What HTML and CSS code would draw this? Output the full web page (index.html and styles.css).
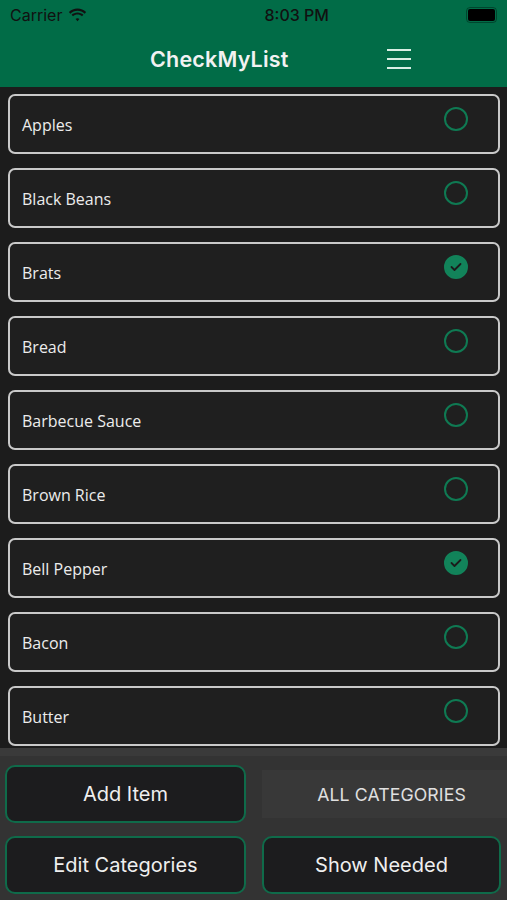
FILE: index.html
```html
<!DOCTYPE html>
<html lang="en">
<head>
    <meta charset="UTF-8">
    <meta name="viewport" content="width=device-width, initial-scale=1.0">
    <title>CheckMyList</title>
    <link rel="stylesheet" href="styles.css">
</head>
<body>

    <div class="top">
        <div class="status-bar">
            <div class="carrier">
                Carrier
                <svg width="19" height="14" viewBox="0 0 17 12">
                    <path d="M8.5 2.2c2.5 0 4.7 1 6.4 2.6l1.3-1.4C14.2 1.4 11.5.2 8.5.2S2.8 1.4.8 3.4l1.3 1.4C3.8 3.2 6 2.2 8.5 2.2z" fill="#111"/>
                    <path d="M8.5 5.6c1.6 0 3 .6 4 1.6l1.3-1.4C12.4 4.5 10.5 3.7 8.5 3.7S4.6 4.5 3.2 5.8l1.3 1.4c1-1 2.4-1.6 4-1.6z" fill="#111"/>
                    <path d="M8.5 8.9c.7 0 1.3.3 1.7.7L8.5 11.6 6.8 9.6c.4-.4 1-.7 1.7-.7z" fill="#111"/>
                </svg>
            </div>
            <div class="clock">8:03 PM</div>
            <div class="battery"><span></span></div>
        </div>
        <div class="nav-bar">
            <h1>CheckMyList</h1>
            <div class="menu-icon"><span></span><span></span><span></span></div>
        </div>
    </div>

    <ul id="itemList" class="item-list"></ul>

    <div class="controls">
        <button class="btn">Add Item</button>
        <button class="btn category-btn">ALL CATEGORIES</button>
        <button class="btn">Edit Categories</button>
        <button class="btn needed-btn">Show Needed</button>
    </div>

    <script>
        const items = [
            { name: "Apples", checked: false },
            { name: "Black Beans", checked: false },
            { name: "Brats", checked: true },
            { name: "Bread", checked: false },
            { name: "Barbecue Sauce", checked: false },
            { name: "Brown Rice", checked: false },
            { name: "Bell Pepper", checked: true },
            { name: "Bacon", checked: false },
            { name: "Butter", checked: false },
        ];

        const checkSvg = '<svg width="12" height="10" viewBox="0 0 12 10"><path d="M1.5 5l3 3 6-6" fill="none" stroke="#1b1b1b" stroke-width="1.8" stroke-linecap="round" stroke-linejoin="round"/></svg>';

        document.getElementById('itemList').innerHTML = items.map(item => `
            <li class="item">
                <span class="item-name">${item.name}</span>
                <span class="check ${item.checked ? 'checked' : ''}">${item.checked ? checkSvg : ''}</span>
            </li>`).join('');
    </script>

</body>
</html>
```

FILE: styles.css
```css
body {
    margin: 0;
    padding: 0;
    width: 507px;
    height: 900px;
    overflow: hidden;
    background-color: #1c1c1c;
    font-family: 'Open Sans', sans-serif;
    display: flex;
    flex-direction: column;
}

.top {
    background-color: #016c47;
    height: 87px;
    flex-shrink: 0;
}

.status-bar {
    height: 30px;
    display: flex;
    align-items: center;
    justify-content: space-between;
    padding: 0 10px;
    font-family: 'Inter', sans-serif;
    font-size: 16px;
    color: #111;
}

.carrier {
    display: flex;
    align-items: center;
    gap: 6px;
}

.clock {
    font-weight: 500;
    margin-left: 40px;
}

.battery {
    width: 27px;
    height: 12px;
    border: 1px solid rgba(0, 0, 0, 0.35);
    border-radius: 4px;
    padding: 1px;
}

.battery span {
    display: block;
    height: 100%;
    background-color: #000;
    border-radius: 2px;
}

.nav-bar {
    height: 57px;
    display: flex;
    align-items: center;
    padding-right: 96px;
}

h1 {
    margin: 0 0 0 150px;
    font-family: 'Inter', sans-serif;
    font-size: 21.5px;
    font-weight: 600;
    color: #f2f2f2;
    letter-spacing: 0.2px;
}

.menu-icon {
    margin-left: auto;
    margin-top: 1px;
    width: 24px;
    display: flex;
    flex-direction: column;
    gap: 7px;
}

.menu-icon span {
    display: block;
    height: 2px;
    background-color: #d8efe4;
}

.item-list {
    list-style-type: none;
    margin: 0;
    padding: 7px 7px 0 8px;
    display: flex;
    flex-direction: column;
    gap: 14px;
    height: 661px;
    flex-shrink: 0;
    box-sizing: border-box;
}

.item {
    height: 60px;
    flex-shrink: 0;
    box-sizing: border-box;
    border: 2px solid #c9c9c9;
    border-radius: 7px;
    background-color: #1f1f1f;
    display: flex;
    justify-content: space-between;
    padding: 0 30px 0 12px;
}

.item-name {
    align-self: center;
    font-size: 16px;
    color: #ececec;
    margin-top: 1px;
}

.check {
    margin-top: 11px;
    width: 24px;
    height: 24px;
    box-sizing: border-box;
    border: 2px solid #0f7a53;
    border-radius: 50%;
    display: flex;
    align-items: center;
    justify-content: center;
}

.check.checked {
    background-color: #12835a;
    border-color: #12835a;
}

.controls {
    flex: 1;
    background-color: #333333;
    border-top: 8px solid #3a3a3a;
    display: grid;
    grid-template-columns: 241px 245px;
    column-gap: 16px;
    row-gap: 13px;
    padding: 9px 0 6px 5px;
    box-sizing: border-box;
    align-content: start;
}

.btn {
    height: 58px;
    background-color: #1c1c1e;
    border: 2px solid #0f6b4a;
    border-radius: 10px;
    color: #efefef;
    font-family: 'Inter', sans-serif;
    font-size: 20px;
    cursor: pointer;
    padding: 0;
}

.category-btn {
    height: 48px;
    align-self: center;
    border: none;
    border-radius: 0;
    background-color: #383838;
    color: #e0e0e0;
    font-size: 17.7px;
    letter-spacing: 0.1px;
    padding-left: 14px;
}

.needed-btn {
    width: 239px;
}
```
